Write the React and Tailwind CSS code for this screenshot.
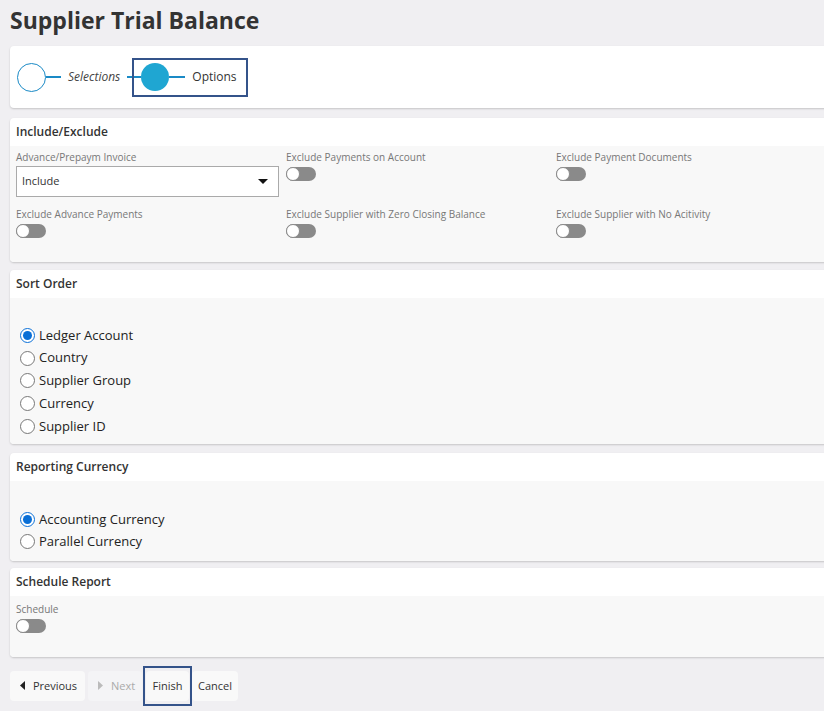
import React from "react";

function Toggle() {
  return (
    <div className="relative w-[30px] h-[14px] rounded-full bg-[#8a8a8a]">
      <div className="absolute left-0 top-0 w-[14px] h-[14px] rounded-full bg-white border border-[#8a8a8a]" />
    </div>
  );
}

function Card({ title, children, bodyClass = "", className = "" }) {
  return (
    <div className={"bg-white rounded-[4px] shadow-[0_1px_2px_rgba(0,0,0,0.18)] overflow-hidden " + className}>
      <div className="h-[28px] flex items-center pl-[6px] text-[12px] font-semibold text-[#333]">{title}</div>
      <div className={"bg-[#f8f8f8] " + bodyClass}>{children}</div>
    </div>
  );
}

function Radio({ label, checked, name, h = "h-[22.75px]" }) {
  return (
    <label className={"flex items-center pl-[10px] " + h}>
      <input
        type="radio"
        name={name}
        defaultChecked={checked}
        className="m-0 w-[15px] h-[15px] accent-[#0a6fd6]"
      />
      <span className="ml-[4px] text-[13px] text-[#222]">{label}</span>
    </label>
  );
}

function Field({ label, children }) {
  return (
    <div>
      <div className="h-[14px] leading-[14px] text-[10px] text-[#777]">{label}</div>
      {children}
    </div>
  );
}

export default function App() {
  return (
    <div className="min-h-screen bg-[#f0eff2] overflow-hidden font-['Open_Sans',sans-serif] text-[#333]">
      <h1 className="h-[46px] pl-[10px] pt-[3px] text-[23px] leading-[34px] font-bold text-[#333]">
        Supplier Trial Balance
      </h1>
      <div className="ml-[10px] mr-[-10px]">
        {/* stepper */}
        <div className="h-[62px] bg-white rounded-[4px] shadow-[0_1px_2px_rgba(0,0,0,0.18)] flex items-center pl-[7px]">
          <div className="w-[29px] h-[29px] rounded-full border border-[#1a8ac6] bg-white" />
          <div className="w-[15px] h-[2px] bg-[#1a8ac6]" />
          <span className="ml-[7px] text-[12px] italic text-[#444]">Selections</span>
          <div className="ml-[7px] w-[5px] h-[2px] bg-[#1a8ac6]" />
          <div className="h-[39px] border-2 border-[#34538a] flex items-center pr-[9px]">
            <div className="w-[7px] h-[2px] bg-[#1a8ac6]" />
            <div className="w-[28px] h-[28px] rounded-full bg-[#1fa6d2]" />
            <div className="w-[16px] h-[2px] bg-[#1a8ac6]" />
            <span className="ml-[7px] text-[12px] font-medium text-[#333]">Options</span>
          </div>
        </div>

        <Card title="Include/Exclude" className="mt-[10px]" bodyClass="pl-[6px] pt-[4px] pb-[24px]">
          <div className="grid grid-cols-[270px_270px_270px]">
            <Field label="Advance/Prepaym Invoice">
              <div className="mt-[2px] w-[263px] h-[31px] border border-[#aaa] bg-white flex items-center justify-between pl-[5px] pr-[10px]">
                <span className="text-[11px] text-[#333]">Include</span>
                <svg width="10" height="6" viewBox="0 0 10 6">
                  <path d="M0 0 L10 0 L5 5 Z" fill="#111" />
                </svg>
              </div>
            </Field>
            <Field label="Exclude Payments on Account">
              <div className="mt-[3px]"><Toggle /></div>
            </Field>
            <Field label="Exclude Payment Documents">
              <div className="mt-[3px]"><Toggle /></div>
            </Field>
          </div>
          <div className="grid grid-cols-[270px_270px_270px] mt-[10px]">
            <Field label="Exclude Advance Payments">
              <div className="mt-[3px]"><Toggle /></div>
            </Field>
            <Field label="Exclude Supplier with Zero Closing Balance">
              <div className="mt-[3px]"><Toggle /></div>
            </Field>
            <Field label="Exclude Supplier with No Acitivity">
              <div className="mt-[3px]"><Toggle /></div>
            </Field>
          </div>
        </Card>

        <Card title="Sort Order" className="mt-[8px]" bodyClass="pt-[26px] pb-[6px]">
          <Radio name="sort" label="Ledger Account" checked />
          <Radio name="sort" label="Country" />
          <Radio name="sort" label="Supplier Group" />
          <Radio name="sort" label="Currency" />
          <Radio name="sort" label="Supplier ID" />
        </Card>

        <Card title="Reporting Currency" className="mt-[9px]" bodyClass="pt-[28px] pb-[8px]">
          <Radio name="cur" label="Accounting Currency" checked h="h-[22px]" />
          <Radio name="cur" label="Parallel Currency" h="h-[22px]" />
        </Card>

        <Card title="Schedule Report" className="mt-[7px]" bodyClass="pl-[6px] pt-[6px] h-[61px]">
          <Field label="Schedule">
            <div className="mt-[3px]"><Toggle /></div>
          </Field>
        </Card>
      </div>

      {/* footer buttons */}
      <div className="flex items-center mt-[9px] pl-[10px]">
        <button className="h-[30px] w-[75px] rounded-[4px] bg-[#f9f9f9] flex items-center justify-center gap-[8px] pl-[2px] text-[11px] text-[#333]">
          <svg width="5" height="9" viewBox="0 0 5 9"><path d="M5 0 L0 4.5 L5 9 Z" fill="#222" /></svg>
          Previous
        </button>
        <button className="ml-[3px] h-[30px] w-[54px] rounded-[4px] bg-[#f4f4f6] flex items-center justify-center gap-[8px] pl-[3px] text-[11px] text-[#aaa]">
          <svg width="5" height="9" viewBox="0 0 5 9"><path d="M0 0 L5 4.5 L0 9 Z" fill="#bbb" /></svg>
          Next
        </button>
        <div className="ml-[1px] h-[40px] w-[49px] border-2 border-[#34538a] flex items-center justify-center">
          <button className="h-[30px] w-[43px] rounded-[4px] bg-[#f9f9f9] text-[11px] text-[#333]">Finish</button>
        </div>
        <button className="h-[30px] w-[46px] rounded-[4px] bg-[#f9f9f9] text-[11px] text-[#333]">Cancel</button>
      </div>
    </div>
  );
}
